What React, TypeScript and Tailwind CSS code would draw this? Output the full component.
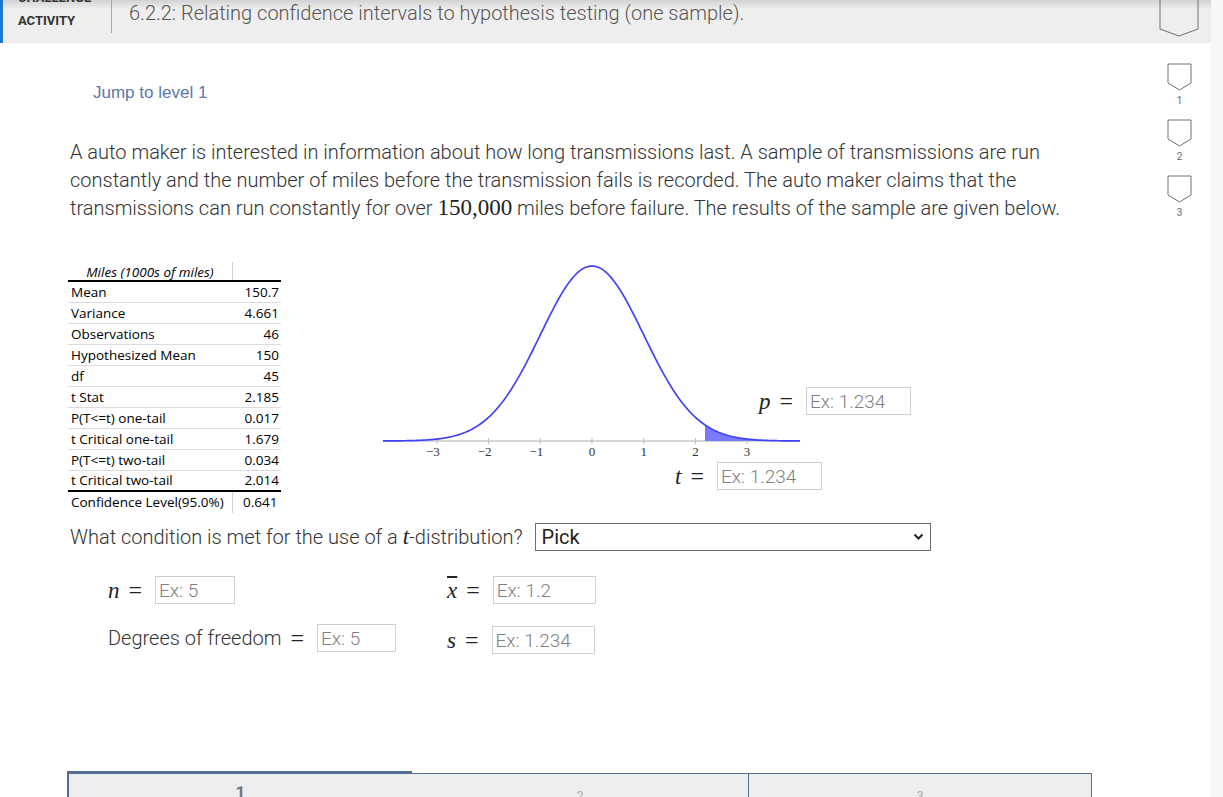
import React from 'react'

const rows: [string, string][] = [
  ['Mean', '150.7'],
  ['Variance', '4.661'],
  ['Observations', '46'],
  ['Hypothesized Mean', '150'],
  ['df', '45'],
  ['t Stat', '2.185'],
  ['P(T<=t) one-tail', '0.017'],
  ['t Critical one-tail', '1.679'],
  ['P(T<=t) two-tail', '0.034'],
  ['t Critical two-tail', '2.014'],
]

function Chevron({ w, h, className }: { w: number; h: number; className?: string }) {
  return (
    <svg width={w + 2} height={h + 2} className={className}>
      <path
        d={`M1 1 L${w + 1} 1 L${w + 1} ${h - 6} L${w / 2 + 1} ${h + 1} L1 ${h - 6} Z`}
        fill="none"
        stroke="#707070"
        strokeWidth="1"
      />
    </svg>
  )
}

function M({ children }: { children: React.ReactNode }) {
  return <span className="font-['Liberation_Serif',serif] text-[23px] italic leading-none text-[#222]">{children}</span>
}

function Eq() {
  return <span className="mx-[9px] font-['Liberation_Serif',serif] text-[24px] leading-none text-[#222]">=</span>
}

function Field({ w, text }: { w: number; text: string }) {
  return (
    <div
      className="ml-[4px] flex h-[28px] items-center border border-[#cfcfcf] bg-white pl-[3px] text-[19px] font-light leading-none text-[#808080]"
      style={{ width: w }}
    >
      {text}
    </div>
  )
}

function Curve() {
  const x0 = 212
  const unit = 51.7
  const base = 185
  const f = (px: number) => base - 175 * Math.exp(-(((px - x0) / unit) ** 2) / 2)
  let d = ''
  for (let px = 3; px <= 420; px += 1) d += `${px === 3 ? 'M' : 'L'}${px} ${f(px).toFixed(2)} `
  const sx = x0 + 2.185 * unit
  let shade = `M${sx} ${base} `
  for (let px = sx; px <= 420; px += 1) shade += `L${px} ${f(px).toFixed(2)} `
  shade += `L420 ${base} Z`
  const ticks = [-3, -2, -1, 0, 1, 2, 3]
  return (
    <svg width="430" height="210" className="block">
      <line x1="3" y1={base} x2="420" y2={base} stroke="#c8c8c8" strokeWidth="1.5" />
      {ticks.map((t) => (
        <line key={t} x1={x0 + t * unit} y1={base - 3} x2={x0 + t * unit} y2={base + 3} stroke="#bbb" strokeWidth="1" />
      ))}
      <path d={shade} fill="#7a7aff" />
      <path d={d} fill="none" stroke="#4343f3" strokeWidth="1.7" />
      {ticks.map((t) => (
        <text
          key={t}
          x={x0 + t * unit - (t < 0 ? 4 : 0)}
          y={base + 15}
          textAnchor="middle"
          fontFamily="Liberation Serif, serif"
          fontSize="13"
          fill="#333"
        >
          {t < 0 ? `\u2212${-t}` : t}
        </text>
      ))}
    </svg>
  )
}

export default function App() {
  return (
    <div className="flex h-[797px] w-full overflow-hidden bg-white font-['Roboto',sans-serif]">
      <div className="flex w-[1211px] shrink-0 flex-col">
        <header className="flex h-[43px] shrink-0 bg-[linear-gradient(to_bottom,#d2d2d2,#eeeeee_9px)]">
          <div className="w-[3px] bg-[#1a78cf]" />
          <div className="flex w-[108px] flex-col pl-[15px] text-[13px] font-bold leading-[15px] text-[#333]">
            <span className="mt-[-10px]">CHALLENGE</span>
            <span className="mt-[8px]">ACTIVITY</span>
          </div>
          <div className="h-[33px] w-px bg-[#a8a8a8]" />
          <h1 className="ml-[17px] mt-[1px] flex-1 text-[20px] font-light leading-[24px] text-[#555]">
            6.2.2: Relating confidence intervals to hypothesis testing (one sample).
          </h1>
          <div className="mr-[12px] mt-[-6px]">
            <Chevron w={38} h={41} />
          </div>
        </header>

        <div className="flex flex-1">
          <main className="flex-1 pl-[70px]">
            <div className="mt-[40px] pl-[23px] font-['Liberation_Sans',sans-serif] text-[17px] leading-[20px] text-[#5a78aa]">
              Jump to level 1
            </div>

            <p className="mt-[35px] w-[1010px] text-[20px] font-light leading-[28px] text-[#333]">
              A auto maker is interested in information about how long transmissions last. A sample of transmissions are
              run constantly and the number of miles before the transmission fails is recorded. The auto maker claims that
              the transmissions can run constantly for over{' '}
              <span className="font-['Liberation_Serif',serif] text-[23px] text-[#222]">150,000</span> miles before
              failure. The results of the sample are given below.
            </p>

            <div className="mt-[40px] flex items-start">
              <div className="ml-[-2px] w-[213px] font-['Open_Sans',sans-serif] text-[13.5px] text-black">
                <div className="flex h-[20px] border-b-2 border-black">
                  <div className="w-[164px] text-center italic leading-[20px]">Miles (1000s of miles)</div>
                  <div className="w-px bg-[#d0d0d0]" />
                </div>
                {rows.map(([k, v], i) => (
                  <div
                    key={k}
                    className={`flex h-[21px] items-center ${i === rows.length - 1 ? 'border-b-2 border-black' : 'border-b border-[#dcdcdc]'}`}
                  >
                    <div className="w-[164px] pl-[3px]">{k}</div>
                    <div className="flex-1 pr-[2px] text-right">{v}</div>
                  </div>
                ))}
                <div className="flex h-[21px] items-center">
                  <div className="w-[164px] pl-[3px]">Confidence Level(95.0%)</div>
                  <div className="h-full w-px bg-[#d0d0d0]" />
                  <div className="flex-1 pl-[10px]">0.641</div>
                </div>
              </div>

              <div className="relative ml-[99px] mt-[-6px] h-[240px] w-[545px]">
                <Curve />
                <div className="absolute right-[14px] top-[131px] flex items-center">
                  <M>p</M>
                  <Eq />
                  <Field w={105} text="Ex: 1.234" />
                </div>
                <div className="absolute right-[103px] top-[206px] flex items-center">
                  <M>t</M>
                  <Eq />
                  <Field w={105} text="Ex: 1.234" />
                </div>
              </div>
            </div>

            <div className="mt-[10px] flex h-[28px] items-center text-[20px] font-light text-[#333]">
              <span>
                What condition is met for the use of a <M>t</M>-distribution?
              </span>
              <div className="ml-[12px] flex h-[28px] w-[396px] items-center justify-between border border-[#707070] pl-[6px] pr-[6px] text-[20px] font-normal text-[#222]">
                <span>Pick</span>
                <svg width="11" height="8" viewBox="0 0 11 8">
                  <path d="M1.5 1.5 L5.5 5.5 L9.5 1.5" fill="none" stroke="#222" strokeWidth="2" />
                </svg>
              </div>
            </div>

            <div className="ml-[38px] mt-[25px] flex flex-col gap-[20px] text-[20px] font-light text-[#333]">
              <div className="flex h-[28px] items-center">
                <div className="flex w-[339px] items-center">
                  <M>n</M>
                  <Eq />
                  <Field w={80} text="Ex: 5" />
                </div>
                <div className="flex items-center">
                  <M>
                    <span className="overline">x</span>
                  </M>
                  <Eq />
                  <Field w={103} text="Ex: 1.2" />
                </div>
              </div>
              <div className="flex h-[28px] items-center">
                <div className="flex w-[339px] items-center">
                  <span>Degrees of freedom</span>
                  <Eq />
                  <Field w={79} text="Ex: 5" />
                </div>
                <div className="mt-[4px] flex items-center">
                  <M>s</M>
                  <Eq />
                  <Field w={103} text="Ex: 1.234" />
                </div>
              </div>
            </div>

            <div className="ml-[-3px] mt-[119px] flex h-[40px] w-[1025px]">
              <div className="flex w-[345px] justify-center border-l-2 border-t-[3px] border-[#546c8e] bg-[#eeeeee] pt-[8px] text-[17px] font-bold leading-[20px] text-[#777]">
                1
              </div>
              <div className="mt-[2px] flex w-[336px] justify-center border-t border-[#546c8e] bg-[#eeeeee] pt-[13px] text-[12px] text-[#aaa]">
                2
              </div>
              <div className="mt-[2px] flex w-[344px] justify-center border-l border-r border-t border-l-dashed border-[#546c8e] bg-[#eeeeee] pt-[13px] text-[12px] text-[#aaa]">
                3
              </div>
            </div>
          </main>

          <nav className="flex w-[61px] flex-col items-center pr-[2px] pt-[20px]">
            {[1, 2, 3].map((n) => (
              <div key={n} className="mb-[12px] flex flex-col items-center">
                <Chevron w={23} h={26} />
                <span className="mt-[4px] text-[10px] leading-[12px] text-[#666]">{n}</span>
              </div>
            ))}
          </nav>
        </div>
      </div>
      <div className="flex-1 bg-[#f7f7f7]" />
    </div>
  )
}
